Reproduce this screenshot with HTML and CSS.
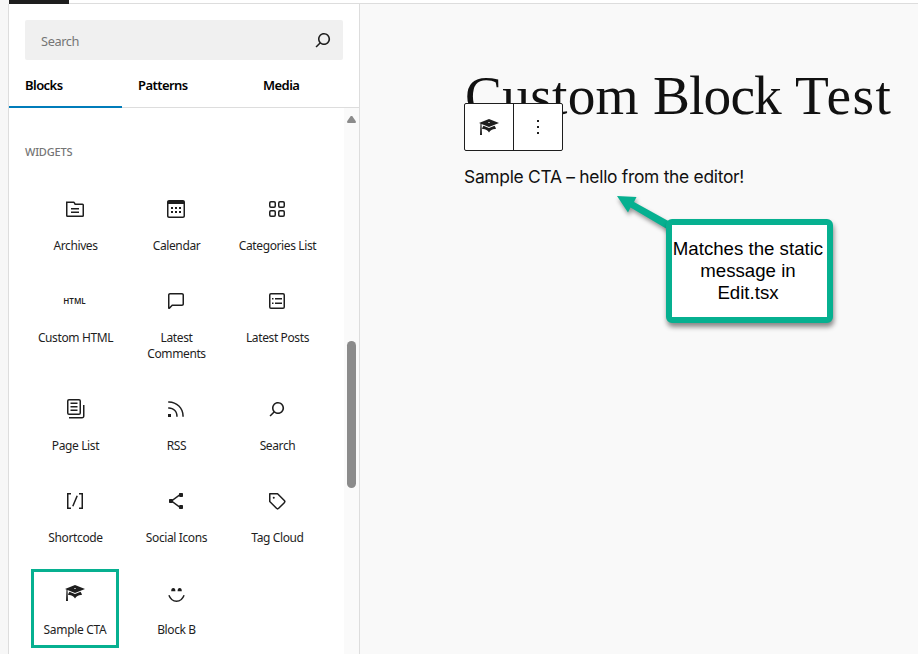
FILE: index.html
```html
<!DOCTYPE html>
<html lang="en">
<head>
<meta charset="utf-8">
<title>Custom Block Test</title>
<link rel="stylesheet" href="styles.css">
</head>
<body>
<svg class="defs" width="0" height="0">
  <symbol id="search" viewBox="0 0 24 24"><path d="M13 5c-3.3 0-6 2.7-6 6 0 1.4.5 2.7 1.3 3.7l-3.8 3.8 1.1 1.1 3.8-3.8c1 .8 2.3 1.3 3.7 1.3 3.3 0 6-2.7 6-6S16.3 5 13 5zm0 10.5c-2.5 0-4.5-2-4.5-4.5s2-4.5 4.5-4.5 4.5 2 4.5 4.5-2 4.5-4.5 4.5z"/></symbol>
  <symbol id="cap" viewBox="0 0 20 20"><path d="M10 10L2.54 7.02 3 18H1l.48-11.41L0 6l10-4 10 4zm0-5c-.55 0-1 .22-1 .5s.45.5 1 .5 1-.22 1-.5-.45-.5-1-.5zm0 6l5.57-2.23c.71.94 1.2 2.07 1.36 3.3-.3-.04-.61-.07-.93-.07-2.55 0-4.78 1.37-6 3.41C8.78 13.37 6.55 12 4 12c-.32 0-.63.03-.93.07.16-1.23.65-2.36 1.36-3.3z"/></symbol>
</svg>
<div class="topbar"><div class="topbar-mark"></div></div>
<div class="workspace">
  <aside class="inserter">
    <div class="search"><span>Search</span><svg class="icon"><use href="#search"/></svg></div>
    <nav class="tabs">
      <div class="tab tab-active">Blocks</div>
      <div class="tab">Patterns</div>
      <div class="tab">Media</div>
    </nav>
    <div class="panel">
      <div class="list">
        <h2>WIDGETS</h2>
        <div class="grid">
          <div class="item"><svg class="icon line" viewBox="0 0 24 24"><path d="M4 5.25h6.6a.7.7 0 0 1 .65.4l.9 1.7H19.5a.75.75 0 0 1 .75.75v10.4a.75.75 0 0 1-.75.75h-15a.75.75 0 0 1-.75-.75V5.25zM8 11.75h8M8 15.25h8"/></svg><span>Archives</span></div>
          <div class="item"><svg class="icon" viewBox="0 0 24 24"><path d="M19 3H5c-1.1 0-2 .9-2 2v14c0 1.1.9 2 2 2h14c1.1 0 2-.9 2-2V5c0-1.1-.9-2-2-2zm.5 16c0 .3-.2.5-.5.5H5c-.3 0-.5-.2-.5-.5V7h15v12zM9 10H7v2h2v-2zm0 4H7v2h2v-2zm4-4h-2v2h2v-2zm4 0h-2v2h2v-2zm-4 4h-2v2h2v-2zm4 0h-2v2h2v-2z"/></svg><span>Calendar</span></div>
          <div class="item"><svg class="icon line" viewBox="0 0 24 24"><rect x="4.75" y="4.75" width="5.5" height="5.5" rx="1.2"/><rect x="13.75" y="4.75" width="5.5" height="5.5" rx="1.2"/><rect x="4.75" y="13.75" width="5.5" height="5.5" rx="1.2"/><rect x="13.75" y="13.75" width="5.5" height="5.5" rx="1.2"/></svg><span>Categories List</span></div>

          <div class="item"><b class="icon html-mark">HTML</b><span>Custom HTML</span></div>
          <div class="item"><svg class="icon" viewBox="0 0 24 24"><path d="M18 4H6c-1.1 0-2 .9-2 2v12.9c0 .6.5 1.1 1.1 1.1.3 0 .5-.1.8-.3L8.5 17H18c1.1 0 2-.9 2-2V6c0-1.1-.9-2-2-2zm.5 11c0 .3-.2.5-.5.5H7.900l-2.400 2.400V6c0-.3.2-.5.5-.5h12c.3 0 .5.2.5.5v9z"/></svg><span>Latest<br>Comments</span></div>
          <div class="item"><svg class="icon" viewBox="0 0 24 24"><path fill-rule="evenodd" d="M18 5.5H6a.5.5 0 0 0-.5.5v12a.5.5 0 0 0 .5.5h12a.5.5 0 0 0 .5-.5V6a.5.5 0 0 0-.5-.5ZM6 4h12a2 2 0 0 1 2 2v12a2 2 0 0 1-2 2H6a2 2 0 0 1-2-2V6a2 2 0 0 1 2-2Zm1 5h1.5v1.5H7V9Zm1.5 4.5H7V15h1.5v-1.5ZM10 9h7v1.5h-7V9Zm7 4.5h-7V15h7v-1.5Z"/></svg><span>Latest Posts</span></div>

          <div class="item"><svg class="icon" viewBox="0 0 24 24"><path fill-rule="evenodd" d="M14.5 5.5h-7V7h7V5.5ZM7.5 9h7v1.5h-7V9Zm7 3.5h-7V14h7v-1.5ZM16 2H6a2 2 0 0 0-2 2v12a2 2 0 0 0 2 2h10a2 2 0 0 0 2-2V4a2 2 0 0 0-2-2ZM6 3.5h10a.5.5 0 0 1 .5.5v12a.5.5 0 0 1-.5.5H6a.5.5 0 0 1-.5-.5V4a.5.5 0 0 1 .5-.5ZM20 8v11c0 .69-.31 1-.999 1H6v1.5h13.001c1.52 0 2.499-.982 2.499-2.499V8H20Z"/></svg><span>Page List</span></div>
          <div class="item"><svg class="icon" viewBox="0 0 24 24"><path d="M5 10.2h-.8v1.5H5c1.9 0 3.8.8 5.1 2.1 1.4 1.4 2.1 3.2 2.1 5.1v.8h1.5V19c0-2.3-.9-4.5-2.6-6.2-1.6-1.6-3.8-2.6-6.1-2.6zm10.4-1.6C12.6 5.8 8.9 4.2 5 4.2h-.8v1.5H5c3.5 0 6.9 1.4 9.4 3.9s3.9 5.8 3.9 9.3v.8h1.5V19c0-3.9-1.6-7.6-4.4-10.4zM4 20h3v-3H4v3z"/></svg><span>RSS</span></div>
          <div class="item"><svg class="icon"><use href="#search"/></svg><span>Search</span></div>

          <div class="item"><svg class="icon line" viewBox="0 0 24 24"><path d="M8 4.75H4.75v14.5H8M16 4.75h3.25v14.5H16M14.2 6.8L9.8 17.2"/></svg><span>Shortcode</span></div>
          <div class="item"><svg class="icon" viewBox="0 0 24 24"><path d="M9 11.8l6.1-4.5c.1.4.4.7.9.7h2c.6 0 1-.4 1-1V5c0-.6-.4-1-1-1h-2c-.6 0-1 .4-1 1v.4l-6.4 4.8c-.2-.1-.4-.2-.6-.2H6c-.6 0-1 .4-1 1v2c0 .6.4 1 1 1h2c.2 0 .4-.1.6-.2l6.4 4.8v.4c0 .6.4 1 1 1h2c.6 0 1-.4 1-1v-2c0-.6-.4-1-1-1h-2c-.5 0-.8.3-.9.7L9 12.2v-.4z"/></svg><span>Social Icons</span></div>
          <div class="item"><svg class="icon" viewBox="0 0 24 24"><path fill-rule="evenodd" d="M4.75 4a.75.75 0 0 0-.75.75v7.826c0 .2.08.39.22.53l6.72 6.716a2.313 2.313 0 0 0 3.276-.001l5.61-5.611a2.315 2.315 0 0 0 0-3.264L13.104 4.22a.75.75 0 0 0-.53-.22H4.75ZM19 12.576a.815.815 0 0 1-.236.574l-5.61 5.611a.814.814 0 0 1-1.153 0L5.5 12.264V5.5h6.763l6.5 6.502a.816.816 0 0 1 .237.574ZM8.75 9.75a1 1 0 1 0 0-2 1 1 0 0 0 0 2Z"/></svg><span>Tag Cloud</span></div>

          <div class="item item-marked"><svg class="icon cap"><use href="#cap"/></svg><span>Sample CTA</span></div>
          <div class="item"><svg class="icon" viewBox="0 0 24 24"><path d="M7.200 10.300a2.100 3.300 0 0 1 4.200 0zM13.600 10.300a2.100 3.300 0 0 1 4.200 0z"/><path class="smile" d="M4.900 14.300c3.200 8 12 8 15.200 0"/></svg><span>Block B</span></div>
        </div>
      </div>
      <div class="scrollbar"><div class="arrow"></div><div class="thumb"></div></div>
    </div>
  </aside>
  <main class="canvas">
    <h1>Custom <span class="title-mid">Block</span> <span class="title-end">Test</span></h1>
    <p>Sample CTA – hello from the editor!</p>
    <div class="toolbar">
      <div class="tool"><svg class="icon cap"><use href="#cap"/></svg></div>
      <div class="tool"><svg class="icon" viewBox="0 0 24 24"><path d="M11 5h2v2h-2zM11 11h2v2h-2zM11 17h2v2h-2z"/></svg></div>
    </div>
    <svg class="pointer" viewBox="0 0 60 40"><path d="M1 1l19.500 1-2.500 5L56 28v9L14.500 12.500 12 17.500z"/></svg>
    <div class="callout">Matches the static<br>message in<br>Edit.tsx</div>
  </main>
</div>
</body>
</html>
```
FILE: styles.css
```css
* { box-sizing: border-box; }
body {
  margin: 0;
  width: 918px;
  height: 654px;
  overflow: hidden;
  background: #f7f7f7;
  color: #1e1e1e;
  font-family: "Noto Sans", "Open Sans", sans-serif;
}
.defs { position: absolute; }
.topbar {
  height: 4px;
  margin-left: 9px;
  background: #fff;
  border-bottom: 1px solid #ddd;
}
.topbar-mark { width: 60px; height: 4px; background: #1e1e1e; }
.workspace { display: flex; height: 650px; padding-left: 8px; }
.inserter {
  display: flex;
  flex-direction: column;
  flex: none;
  width: 352px;
  background: #fff;
  border-left: 1px solid #ddd;
  border-right: 1px solid #ddd;
}
.icon { display: block; flex: none; width: 24px; height: 24px; fill: #1e1e1e; overflow: visible; }
.line { fill: none; stroke: #1e1e1e; stroke-width: 1.5; }
.smile { fill: none; stroke: #1e1e1e; stroke-width: 1.5; }
.cap { width: 20px; height: 20px; margin: 2px; }
.search {
  display: flex;
  align-items: center;
  justify-content: space-between;
  height: 40px;
  margin: 16px 16px 0;
  padding: 0 8px 0 16px;
  background: #f0f0f0;
  border-radius: 2px;
  color: #757575;
  font-size: 12.8px;
  letter-spacing: -.4px;
}
.search span { margin-top: 2px; }
.tabs {
  display: flex;
  height: 48px;
  border-bottom: 1px solid #ddd;
  color: #000;
  font-size: 13px;
  font-weight: 600;
  letter-spacing: -.55px;
}
.tab { padding: 16px 16px 0; line-height: 18px; }
.tab-active { width: 113px; height: 48px; border-bottom: 2px solid #007cba; }
.tab:nth-child(2) { width: 125px; }
.panel { display: flex; flex: 1; min-height: 0; overflow: hidden; }
.list { width: 335px; }
h2 {
  margin: 35px 16px 17px;
  color: #757575;
  font-size: 11px;
  font-weight: 500;
  line-height: 17px;
  letter-spacing: -.2px;
}
.grid { display: grid; grid-template-columns: repeat(3, 101px); padding-left: 16px; }
.item {
  display: flex;
  flex-direction: column;
  align-items: center;
  min-height: 92px;
  padding: 20px 0 15px;
  font-size: 12px;
  line-height: 16px;
  text-align: center;
  letter-spacing: -.38px;
}
.item .icon { margin-right: 1px; }
.item span { margin-top: 17px; }
.item .cap { margin: 2px; }
.item .cap + span { margin: 17px 0 0; letter-spacing: -.3px; }
.item .html-mark { width: auto; margin-right: 2px; font-size: 8px; font-weight: 600; line-height: 24px; letter-spacing: 0; }
.item-marked {
  width: 88px;
  height: 79px;
  min-height: 0;
  margin: 8px 0 0 6px;
  padding: 9px 0 0;
  border: 3px solid #06b090;
}
.scrollbar { width: 15px; background: #fafafa; padding: 8px 3px 0; }
.arrow { height: 7px; background: #8b8b8b; clip-path: polygon(42% 0, 58% 0, 100% 80%, 95% 100%, 5% 100%, 0 80%); }
.thumb { height: 147px; margin-top: 218px; background: #8b8b8b; border-radius: 5px; }
.canvas { position: relative; flex: 1; padding: 59px 0 0 104px; background: #f9f9f9; }
h1 {
  margin: 0 0 0 1px;
  color: #111;
  font-family: "Liberation Serif", serif;
  font-size: 55.400px;
  font-weight: 400;
  line-height: 66px;
  letter-spacing: .26px;
  white-space: nowrap;
}
.title-mid { letter-spacing: -.9px; }
.title-end { letter-spacing: 1.500px; }
p {
  margin: 35px 0 0;
  color: #111;
  font-family: Inter, sans-serif;
  font-size: 17.400px;
  line-height: 26px;
  letter-spacing: -.28px;
  white-space: nowrap;
}
.toolbar {
  position: absolute;
  left: 104px;
  top: 99px;
  display: flex;
  width: 99px;
  height: 48px;
  background: #fff;
  border: 1px solid #1e1e1e;
  border-radius: 2px;
}
.tool { display: flex; flex: 1; align-items: center; justify-content: center; }
.tool + .tool { border-left: 1px solid #1e1e1e; }
.pointer {
  position: absolute;
  left: 256px;
  top: 191px;
  width: 60px;
  height: 40px;
  fill: #06b090;
  filter: drop-shadow(1px 3px 2px rgba(0, 0, 0, .4));
}
.callout {
  position: absolute;
  left: 306px;
  top: 215px;
  width: 167px;
  height: 104px;
  padding: 13px 3px 0 0;
  background: #fff;
  border: 6px solid #06b090;
  border-radius: 6px;
  box-shadow: 1px 4px 5px rgba(0, 0, 0, .45);
  color: #000;
  font-family: "Liberation Sans", Arial, sans-serif;
  font-size: 18.660px;
  line-height: 22px;
  text-align: center;
  white-space: nowrap;
}
```
